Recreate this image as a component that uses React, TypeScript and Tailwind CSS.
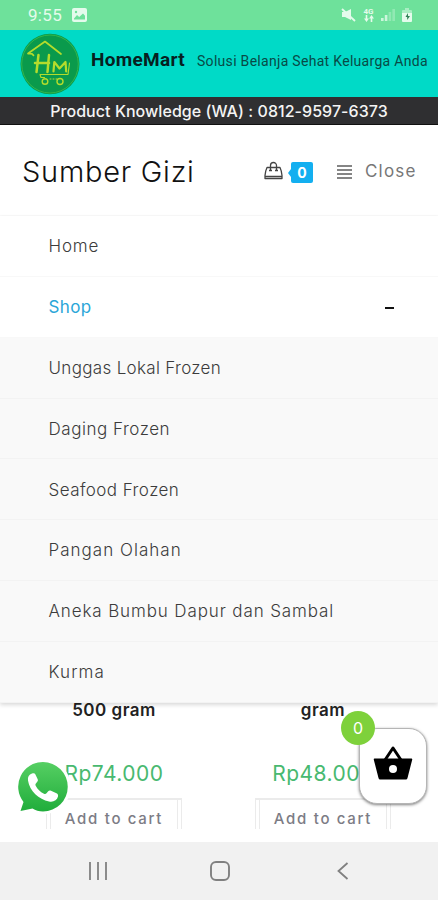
import React from "react";

const menu = [
  { label: "Home", className: "text-[#3c3c3c] tracking-[0.8px]" },
  { label: "Shop", className: "text-[#2ba6d8] font-normal tracking-[0.4px]", open: true },
  { label: "Unggas Lokal Frozen", className: "text-[#3c3c3c] tracking-[0.32px]", sub: true },
  { label: "Daging Frozen", className: "text-[#3c3c3c] tracking-[0.53px]", sub: true },
  { label: "Seafood Frozen", className: "text-[#3c3c3c] tracking-[0.44px]", sub: true },
  { label: "Pangan Olahan", className: "text-[#3c3c3c] tracking-[1.02px]", sub: true },
  { label: "Aneka Bumbu Dapur dan Sambal", className: "text-[#3c3c3c] tracking-[0.88px]", sub: true },
  { label: "Kurma", className: "text-[#3c3c3c] tracking-[1.1px]", sub: true },
];

const Logo = () => (
  <svg width="60" height="62" viewBox="0 0 60 62" fill="none">
    <ellipse cx="30" cy="31" rx="29.5" ry="30.3" fill="#0a9a4c" />
    <ellipse cx="30" cy="31" rx="28.3" ry="29" stroke="#38b94a" strokeWidth="0.9" />
    <g stroke="#b4dc2c" strokeLinecap="round" strokeLinejoin="round">
      <path d="M8 20.500 25 8.500l16 12.500M8 20.500l4 .3 1.500 1.500" strokeWidth="1.7" />
      <path d="M18.500 22 16.500 39M29 22l-1.500 17M15 30h14" strokeWidth="2.5" />
      <path d="M33.500 38.500l.8-9.500 5.200 6.500 6-6.500.7 9.500" strokeWidth="2.2" />
      <path d="M49.500 30l-1.500 11.500H20l1 3h3.500" strokeWidth="1.100" />
      <path d="M30 46h7" strokeWidth="1" strokeDasharray="1 2" />
      <circle cx="25" cy="48.500" r="2.8" strokeWidth="1.4" />
      <circle cx="40" cy="48.500" r="3" strokeWidth="1.4" />
    </g>
  </svg>
);

const StatusBar = () => (
  <div className="flex h-[30px] items-center bg-[#6ee19b] pl-7 pr-[26px] text-[#e4fbec]">
    <span className="pt-px text-[17px] tracking-[0.3px] font-['Roboto',sans-serif]">9:55</span>
    <svg className="ml-[10px]" width="15" height="14" viewBox="0 0 15 14">
      <rect width="15" height="14" rx="2" fill="currentColor" />
      <path d="M2 10.500 5 7l2.200 2L11 5.500l2 2.200v3.800H2z" fill="#6ee19b" />
      <circle cx="4" cy="4" r="1.2" fill="#6ee19b" />
    </svg>
    <div className="ml-auto flex items-center gap-[7px]">
      <svg width="15" height="14" viewBox="0 0 15 14" fill="currentColor">
        <path d="M1 4h3l6-3v11L4 9H1z" />
        <path d="M1 1 14 13" stroke="currentColor" strokeWidth="1.8" />
      </svg>
      <div className="flex w-[11px] flex-col items-center font-['Roboto',sans-serif]">
        <span className="text-[8px] leading-[7px] font-bold">4G</span>
        <svg width="10" height="7" viewBox="0 0 10 7" fill="currentColor">
          <path d="M0 3.500h1.700V0h1.600v3.500H5L2.500 7zM5 3.500h1.700V7h1.600V3.500H10L7.500 0z" />
        </svg>
      </div>
      <svg width="14" height="14" viewBox="0 0 14 14" fill="currentColor">
        <path d="M0 10h2.600v3H0zM3.800 7h2.600v6H3.800z" opacity="0.8" />
        <path d="M7.600 4h2.600v9H7.600zM11.400 1H14v12h-2.600z" opacity="0.3" />
      </svg>
      <svg width="10" height="14" viewBox="0 0 10 14">
        <path d="M3 0h4v2h2q1 0 1 1v2H0V3q0-1 1-1h2z" fill="currentColor" opacity="0.5" />
        <path d="M0 5h10v8q0 1-1 1H1q-1 0-1-1z" fill="currentColor" />
        <path d="M6 5 3.500 9h1.700v3L8 8H6z" fill="#2f8055" />
      </svg>
    </div>
  </div>
);

const Product = ({ name, price }: { name: string; price: string }) => (
  <div className="flex w-[136px] flex-col items-center">
    <span className="h-[18px] text-[17px] leading-[14px] font-semibold tracking-[0.5px] text-[#222]">
      {name}
    </span>
    <span className="mt-[41px] text-[21px] leading-[24px] tracking-[0.5px] whitespace-nowrap text-[#48b970]">
      {price}
    </span>
    <div className="mt-[12px] h-[31px] w-full border-x border-t-2 border-[#ebebeb] px-[3px]">
      <div className="h-full border-x border-[#ebebeb] pt-[10px] text-center text-[15px] leading-[18px] font-medium tracking-[1.7px] whitespace-nowrap text-[#7c7c85]">
        Add to cart
      </div>
    </div>
  </div>
);

export default function App() {
  return (
    <div className="relative flex h-[900px] w-[438px] flex-col overflow-hidden bg-white font-['Inter',sans-serif]">
      <StatusBar />
      <div className="flex h-[67px] items-center bg-[#00dac7] pl-5">
        <Logo />
        <span className="ml-[11px] w-[106px] pb-[7px] text-[19px] font-bold tracking-[0.3px] whitespace-nowrap text-[#07201f] font-['Roboto',sans-serif]">
          HomeMart
        </span>
        <span className="pb-[4px] text-[14px] tracking-[0.3px] whitespace-nowrap text-[#084a46] font-['Roboto',sans-serif]">
          Solusi Belanja Sehat Keluarga Anda
        </span>
      </div>
      <div className="flex h-7 items-center justify-center border-b border-[#111] bg-[#2f2f31] text-base font-medium tracking-[0.05px] whitespace-nowrap text-[#f4f4f4]">
        Product Knowledge (WA) : 0812-9597-6373
      </div>

      <header className="flex h-[91px] items-center border-b border-[#fafafa] pt-[3px] pr-[22px] pl-[22px]">
        <h1 className="text-[29px] font-light tracking-[0.75px] text-[#111]">Sumber Gizi</h1>
        <svg className="mb-[3px] ml-auto" width="19" height="19" viewBox="0 0 19 19" fill="none" stroke="#444" strokeWidth="1.3">
          <path d="M3 6.500h13q1.500 3 2 8v3H1v-3q.5-5 2-8zM6.500 10V4.500a3 3 0 0 1 6 0V10" strokeLinejoin="round" />
          <path d="M5 9.500h3M11 9.500h3M1 15.500h17" />
        </svg>
        <div className="ml-[5px] flex items-center pt-[2px]">
          <span className="border-y-[4px] border-r-[3px] border-y-transparent border-r-[#13aff0]" />
          <span className="mr-px flex h-[21px] w-[22px] items-center justify-center rounded-[2px] bg-[#13aff0] text-sm font-bold text-white">
            0
          </span>
        </div>
        <div className="ml-[23px] flex w-[15px] flex-col gap-[2px]">
          <span className="h-[2px] bg-[#858585]" />
          <span className="h-[2px] bg-[#858585]" />
          <span className="h-[2px] bg-[#858585]" />
          <span className="h-[2px] bg-[#858585]" />
        </div>
        <span className="ml-[13px] w-[51px] text-[17px] tracking-[1.2px] whitespace-nowrap text-[#777]">Close</span>
      </header>

      <nav className="relative z-10 bg-white shadow-[0_2px_4px_rgba(0,0,0,0.15)]">
        {menu.map((item) => (
          <div
            key={item.label}
            className={`flex h-[60.85px] items-center justify-between border-b pt-[2px] pr-[44px] pl-[48.5px] text-[17px] font-light ${
              item.sub ? "border-[#f3f3f3] bg-[#f9f9f9]" : "border-[#f8f8f8]"
            }`}
          >
            <span className={`whitespace-nowrap ${item.className}`}>{item.label}</span>
            {item.open && <span className="h-[2px] w-[9px] bg-[#111]" />}
          </div>
        ))}
      </nav>

      <main className="flex gap-[73px] pl-[46px]">
        <Product name="500 gram" price="Rp74.000" />
        <Product name="gram" price="Rp48.000" />
      </main>

      <footer className="mt-auto flex h-[58px] items-center bg-[#f1f1f1] pl-[89px] text-[#808080]">
        <svg width="18" height="18" viewBox="0 0 18 18" stroke="currentColor" strokeWidth="1.8">
          <path d="M1 0v18M9 0v18M17 0v18" />
        </svg>
        <svg className="ml-[103px]" width="20" height="20" viewBox="0 0 20 20" fill="none" stroke="currentColor" strokeWidth="1.9">
          <rect x="1" y="1" width="18" height="18" rx="5" />
        </svg>
        <svg className="ml-[107px]" width="12" height="18" viewBox="0 0 12 18" fill="none" stroke="currentColor" strokeWidth="1.8">
          <path d="M10.500 1 1.500 9l9 8" />
        </svg>
      </footer>

      {/* floating buttons */}
      <svg className="absolute top-[757px] left-[13px]" width="60" height="60" viewBox="0 0 60 60" overflow="visible">
        <defs>
          <linearGradient id="wa" x1="0" y1="0" x2="0" y2="1">
            <stop offset="0" stopColor="#56cf63" />
            <stop offset="1" stopColor="#20ad3b" />
          </linearGradient>
        </defs>
        <path
          d="M30 5a24.700 24.700 0 0 1 0 49.500q-6 0-10.500-3L7.500 54 10.500 45A24.700 24.700 0 0 1 30 5z"
          fill="url(#wa)"
          stroke="#fff"
          strokeWidth="6"
          paintOrder="stroke"
        />
        <path
          d="M19 16.500c-3 1-4.500 3.500-4 7C16.500 34 26 42.500 36 44.500c4.500.8 8-1 9-5 .3-1.500-.2-2.500-1.500-3.200l-5.500-2.600c-1.200-.5-2-.3-2.800.6l-1.700 2c-.8.8-1.500.9-2.500.4-4-2-6.500-4.500-8.300-8-.5-1-.3-1.700.4-2.500l1.300-1.600c.6-.8.6-1.500.3-2.400l-2.400-5c-.5-1-1.500-1.300-3.300-.7z"
          fill="#fff"
        />
      </svg>

      <div className="absolute top-[728px] left-[359px] z-20 flex h-[76px] w-[68px] items-center justify-center rounded-[18px] border border-[#b5b5b5] bg-white shadow-[0_1px_3px_rgba(0,0,0,0.5)]">
        <svg className="-mt-[6px]" width="40" height="36" viewBox="0 0 40 36">
          <path d="M12 15 20 3l8 12" fill="none" stroke="#000" strokeWidth="3" strokeLinejoin="round" />
          <path d="M1.500 13.500h37q1 0 .7 1.200L34.500 33q-.3 1.500-1.700 1.500H7.200q-1.400 0-1.700-1.500L.8 14.700q-.3-1.200.7-1.200z" />
          <circle cx="20" cy="24" r="4" fill="#fff" />
        </svg>
      </div>
      <span className="absolute top-[711px] left-[341px] z-20 flex h-[34px] w-[34px] items-center justify-center rounded-full bg-[#7ed13b] text-base text-white">
        0
      </span>
    </div>
  );
}
